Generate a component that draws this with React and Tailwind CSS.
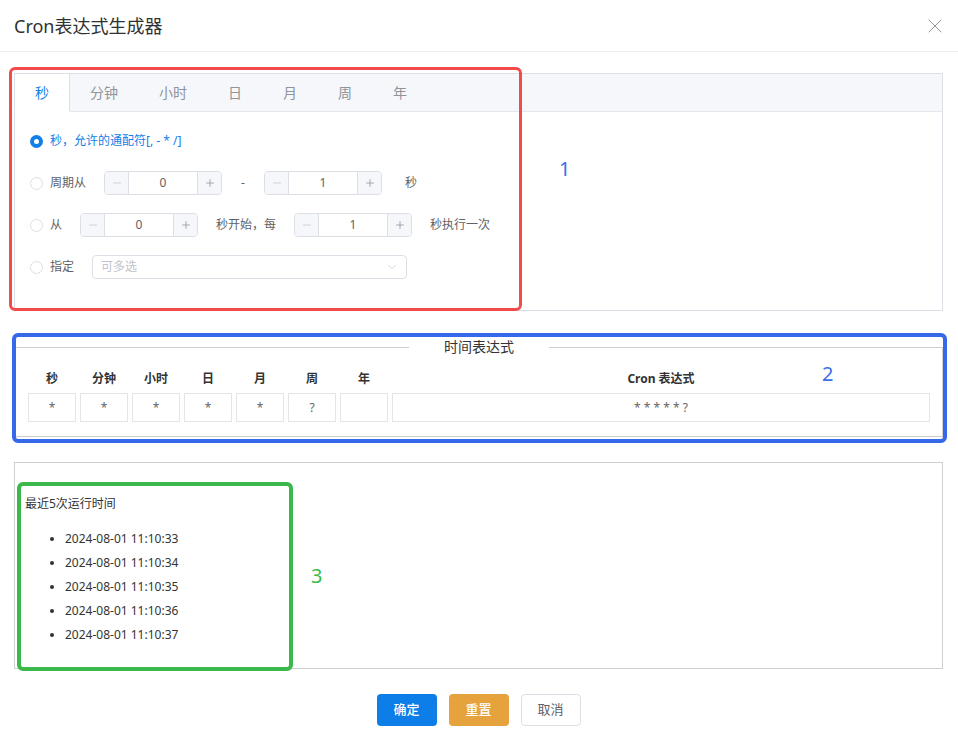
import React from 'react';
import { Minus, Plus, X, ChevronDown } from 'lucide-react';

const tabs = ['秒', '分钟', '小时', '日', '月', '周', '年'];
const cols = [
  { name: '秒', value: '*' },
  { name: '分钟', value: '*' },
  { name: '小时', value: '*' },
  { name: '日', value: '*' },
  { name: '月', value: '*' },
  { name: '周', value: '?' },
  { name: '年', value: '' },
];
const runs = [
  '2024-08-01 11:10:33',
  '2024-08-01 11:10:34',
  '2024-08-01 11:10:35',
  '2024-08-01 11:10:36',
  '2024-08-01 11:10:37',
];

function Radio({ checked }) {
  if (checked) {
    return (
      <span className="flex h-[13px] w-[13px] items-center justify-center rounded-full bg-[#117fe8]">
        <span className="h-[5px] w-[5px] rounded-full bg-white" />
      </span>
    );
  }
  return <span className="h-[13px] w-[13px] rounded-full border border-[#dcdfe6] bg-white" />;
}

function NumInput({ value }) {
  return (
    <div className="flex h-6 w-[118px] overflow-hidden rounded border border-[#dcdfe6] bg-white text-xs text-[#606266]">
      <span className="flex w-6 items-center justify-center border-r border-[#dcdfe6] bg-[#f5f7fa] text-[#c0c4cc]">
        <Minus size={12} strokeWidth={1.5} />
      </span>
      <span className="flex flex-1 items-center justify-center">{value}</span>
      <span className="flex w-6 items-center justify-center border-l border-[#dcdfe6] bg-[#f5f7fa] text-[#8c8f96]">
        <Plus size={12} strokeWidth={1.5} />
      </span>
    </div>
  );
}

export default function App() {
  return (
    <div className="relative h-[756px] w-[958px] overflow-hidden bg-white font-['Noto_Sans','Noto_Sans_CJK_SC',sans-serif]">
      {/* Header */}
      <div className="flex h-[52px] items-center justify-between border-b border-[#ebeef5] pl-[14px] pr-[11px]">
        <span className="text-lg text-[#303133]">Cron表达式生成器</span>
        <X size={24} strokeWidth={1} className="text-[#909399]" />
      </div>

      <div className="px-[14px] pr-[15px] pt-[21px]">
        {/* Tabs card */}
        <div className="border border-[#dcdfe6]">
          <div className="flex h-[38px] border-b border-[#e4e7ed] bg-[#f5f7fa]">
            {tabs.map((t, i) => (
              <div
                key={t}
                className={`-mb-px flex h-[38px] items-center border-x px-5 text-sm ${i > 0 ? '-ml-px' : ''} ${
                  i === 0
                    ? '-ml-px border-[#dcdfe6] border-b border-b-white bg-white text-[#117fe8]'
                    : 'border-transparent text-[#909399]'
                }`}
              >
                {t}
              </div>
            ))}
          </div>
          <div className="px-[15px] pb-[22px] pt-2 text-xs text-[#606266]">
            <div className="flex h-[42px] items-center">
              <Radio checked />
              <span className="ml-[7px] text-[#117fe8]">秒，允许的通配符[, - * /]</span>
            </div>
            <div className="flex h-[42px] items-center gap-[18px]">
              <span className="flex items-center gap-[7px]">
                <Radio />
                周期从
              </span>
              <NumInput value="0" />
              <span className="w-[6px] text-center">-</span>
              <NumInput value="1" />
              <span className="ml-[5px]">秒</span>
            </div>
            <div className="flex h-[42px] items-center gap-[18px]">
              <span className="flex items-center gap-[7px]">
                <Radio />
                从
              </span>
              <NumInput value="0" />
              <span>秒开始，每</span>
              <NumInput value="1" />
              <span>秒执行一次</span>
            </div>
            <div className="flex h-[42px] items-center gap-[18px]">
              <span className="flex items-center gap-[7px]">
                <Radio />
                指定
              </span>
              <div className="flex h-6 w-[315px] items-center justify-between rounded border border-[#dcdfe6] pl-[8px] pr-[7px]">
                <span className="text-[#c0c4cc]">可多选</span>
                <ChevronDown size={14} strokeWidth={1.2} className="text-[#c0c4cc]" />
              </div>
            </div>
          </div>
        </div>

        {/* Expression */}
        <fieldset className="mt-[26px] ml-px border border-[#cfcfcf] px-[10px] pb-[12px]">
          <legend className="mx-auto px-[35px] text-sm leading-5 text-[#333]">时间表达式</legend>
          <div className="pt-[10px] text-xs">
            <div className="flex h-6 items-center font-bold text-[#333]">
              {cols.map((c) => (
                <div key={c.name} className="w-[52px] text-center">
                  {c.name}
                </div>
              ))}
              <div className="flex-1 text-center">Cron 表达式</div>
            </div>
            <div className="flex h-[33px] items-center text-[#666]">
              {cols.map((c) => (
                <div key={c.name} className="w-[52px] px-[2px]">
                  <div className="flex h-[29px] items-center justify-center border border-[#e4e4e4]">{c.value}</div>
                </div>
              ))}
              <div className="flex-1 px-[2px]">
                <div className="flex h-[29px] items-center justify-center border border-[#e4e4e4]">* * * * * ?</div>
              </div>
            </div>
          </div>
        </fieldset>

        {/* Run times */}
        <div className="mt-[25px] h-[207px] border border-[#cfcfcf] pl-[10px] pt-[32px] text-xs text-[#333]">
          <p className="leading-[18px]">最近5次运行时间</p>
          <ul className="mt-[14px] list-disc pl-10">
            {runs.map((r) => (
              <li key={r} className="leading-6">
                {r}
              </li>
            ))}
          </ul>
        </div>

        {/* Footer */}
        <div className="mt-[25px] flex justify-center gap-3">
          <button className="h-8 w-[60px] rounded bg-[#0d7de8] text-[13px] font-medium text-white">确定</button>
          <button className="h-8 w-[60px] rounded bg-[#e6a23c] text-[13px] font-medium text-white">重置</button>
          <button className="h-8 w-[60px] rounded border border-[#dcdfe6] bg-white text-[13px] text-[#606266]">取消</button>
        </div>
      </div>

      {/* Annotations */}
      <div className="pointer-events-none absolute left-[9px] top-[67px] h-[244px] w-[513px] rounded-md border-[3px] border-[#f24b4b]" />
      <span className="absolute left-[559px] top-[155px] text-xl text-[#3a6fe8]">1</span>
      <div className="pointer-events-none absolute left-[12px] top-[333px] h-[110px] w-[935px] rounded-md border-4 border-[#3568ea]" />
      <span className="absolute left-[822px] top-[360px] text-xl text-[#3a6fe8]">2</span>
      <div className="pointer-events-none absolute left-[17px] top-[482px] h-[189px] w-[276px] rounded-md border-4 border-[#3cb84a]" />
      <span className="absolute left-[311px] top-[562px] text-xl text-[#3cb84a]">3</span>
    </div>
  );
}
